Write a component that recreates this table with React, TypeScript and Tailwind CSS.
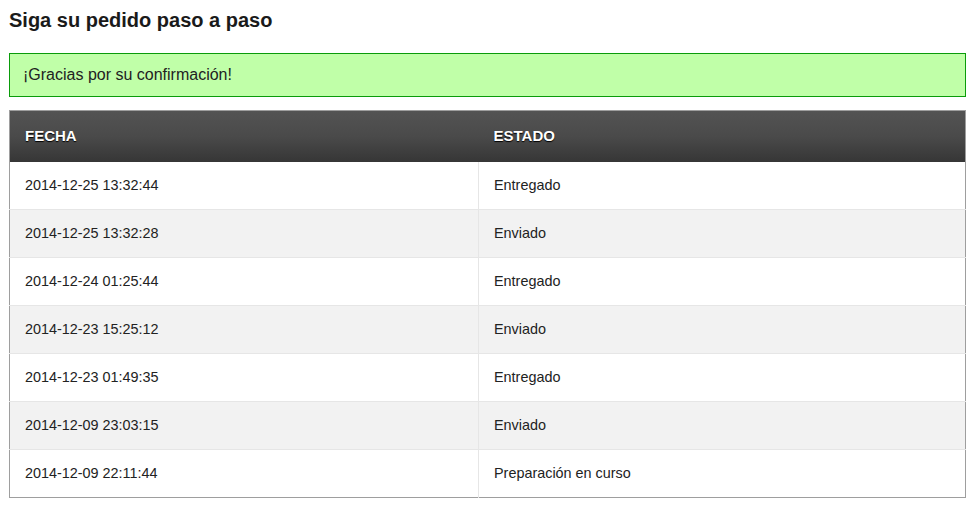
import React from "react";

const rows: Array<[string, string]> = [
  ["2014-12-25 13:32:44", "Entregado"],
  ["2014-12-25 13:32:28", "Enviado"],
  ["2014-12-24 01:25:44", "Entregado"],
  ["2014-12-23 15:25:12", "Enviado"],
  ["2014-12-23 01:49:35", "Entregado"],
  ["2014-12-09 23:03:15", "Enviado"],
  ["2014-12-09 22:11:44", "Preparación en curso"],
];

export default function App() {
  return (
    <div className="w-[980px] h-[515px] bg-white px-[9px] pt-[8px] text-[#222] font-['Liberation_Sans',Arial,sans-serif]">
      {/* Page title */}
      <h1 className="text-[20px] leading-[24px] font-bold text-[#1a1a1a]">Siga su pedido paso a paso</h1>

      {/* Confirmation notice */}
      <div className="mt-[21px] w-[957px] h-[44px] flex items-center border border-[#0a9b0a] bg-[#c0ffa8] pl-[13px] text-[16px] text-[#222]">
        ¡Gracias por su confirmación!
      </div>

      {/* History table */}
      <table className="mt-[13px] w-[957px] border-collapse border border-[#9e9e9e] text-[14.4px]">
        <thead>
          <tr className="h-[51px] bg-gradient-to-b from-[#535353] via-[#4a4a4a] to-[#363636]">
            <th className="w-[469px] pl-[15px] text-left text-[15px] font-bold text-white [text-shadow:0_1px_1px_#000]">FECHA</th>
            <th className="pl-[15px] text-left text-[15px] font-bold text-white [text-shadow:0_1px_1px_#000]">ESTADO</th>
          </tr>
        </thead>
        <tbody>
          {rows.map(([fecha, estado], i) => (
            <tr
              key={fecha}
              className={`h-[48px] ${i % 2 === 1 ? "bg-[#f2f2f2]" : "bg-white"} ${
                i < rows.length - 1 ? "border-b border-[#e6e6e6]" : ""
              }`}
            >
              <td className="pl-[15px] pt-px border-r border-[#e6e6e6]">{fecha}</td>
              <td className="pl-[15px] pt-px">{estado}</td>
            </tr>
          ))}
        </tbody>
      </table>
    </div>
  );
}
